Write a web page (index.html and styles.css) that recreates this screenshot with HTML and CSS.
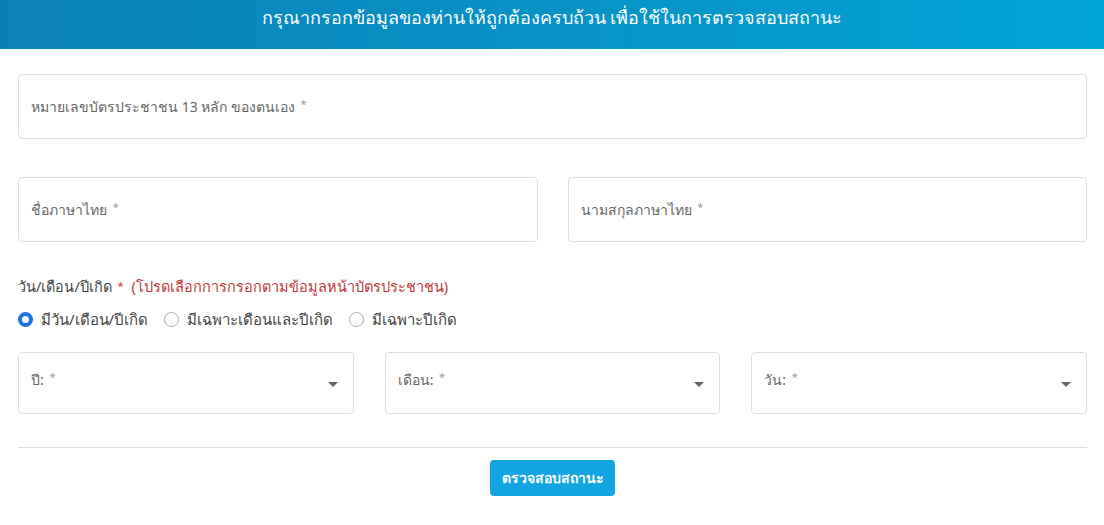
FILE: index.html
```html
<!DOCTYPE html>
<html lang="th">
<head>
<meta charset="UTF-8">
<title>ตรวจสอบสถานะ</title>
<link rel="stylesheet" href="styles.css">
</head>
<body>

<div class="header">กรุณากรอกข้อมูลของท่านให้ถูกต้องครบถ้วน เพื่อใช้ในการตรวจสอบสถานะ</div>

<form class="form">
  <!-- เลขบัตรประชาชน -->
  <div class="field">
    <span class="placeholder">หมายเลขบัตรประชาชน 13 หลัก ของตนเอง <span class="star">*</span></span>
  </div>

  <!-- ชื่อ / นามสกุล -->
  <div class="row two">
    <div class="field"><span class="placeholder">ชื่อภาษาไทย <span class="star">*</span></span></div>
    <div class="field"><span class="placeholder">นามสกุลภาษาไทย <span class="star">*</span></span></div>
  </div>

  <!-- วันเกิด -->
  <div class="birth-label">
    วัน/เดือน/ปีเกิด <span class="star">*</span>
    <span class="note">(โปรดเลือกการกรอกตามข้อมูลหน้าบัตรประชาชน)</span>
  </div>
  <div class="radios">
    <label class="radio"><span class="dot checked"></span>มีวัน/เดือน/ปีเกิด</label>
    <label class="radio"><span class="dot"></span>มีเฉพาะเดือนและปีเกิด</label>
    <label class="radio"><span class="dot"></span>มีเฉพาะปีเกิด</label>
  </div>

  <div class="row three">
    <div class="field select"><span class="placeholder">ปี: <span class="star">*</span></span><span class="arrow"></span></div>
    <div class="field select"><span class="placeholder">เดือน: <span class="star">*</span></span><span class="arrow"></span></div>
    <div class="field select"><span class="placeholder">วัน: <span class="star">*</span></span><span class="arrow"></span></div>
  </div>

  <hr class="divider">

  <div class="actions">
    <button type="button" class="btn">ตรวจสอบสถานะ</button>
  </div>
</form>

</body>
</html>
```

FILE: styles.css
```css
* {
  box-sizing: border-box;
}

body {
  margin: 0;
  background-color: #fff;
  font-family: "Noto Sans", "DejaVu Sans", sans-serif;
  color: #444;
}

.header {
  height: 49px;
  padding-top: 5px;
  background: linear-gradient(90deg, #0a80b7 0%, #0794c7 55%, #01a4d6 100%);
  color: #fff;
  font-size: 18px;
  text-align: center;
  line-height: 25px;
}

.form {
  padding: 25px 17px 0 18px;
}

.field {
  display: flex;
  align-items: center;
  height: 65px;
  padding: 0 12px;
  border: 1px solid #dedede;
  border-radius: 4px;
  background-color: #fff;
}

.placeholder {
  font-size: 14px;
  color: #666;
}

.star {
  margin-left: 2px;
  font-size: 11px;
  color: #999;
  vertical-align: top;
}

.row {
  display: grid;
  margin-top: 38px;
}

.row.two {
  grid-template-columns: 1fr 1fr;
  gap: 30px;
}

.row.three {
  grid-template-columns: 1fr 1fr 1fr;
  gap: 31px;
  margin-top: 22px;
}

.select {
  height: 62px;
  justify-content: space-between;
  align-items: center;
  padding-right: 15px;
}

.select .placeholder {
  margin-top: -6px;
}

.arrow {
  width: 0;
  height: 0;
  border-left: 5px solid transparent;
  border-right: 5px solid transparent;
  border-top: 5px solid #666;
  margin-top: 2px;
}

.birth-label {
  margin-top: 33px;
  font-size: 14.5px;
  color: #444;
  line-height: 22px;
}

.birth-label .star {
  color: #d03a3a;
}

.note {
  margin-left: 4px;
  color: #c0393b;
}

.radios {
  display: flex;
  gap: 16px;
  margin-top: 11px;
  font-size: 15px;
  line-height: 22px;
}

.radio {
  display: flex;
  align-items: center;
  gap: 8px;
  color: #444;
}

.dot {
  width: 15px;
  height: 15px;
  border: 1px solid #aaa;
  border-radius: 50%;
  background-color: #fff;
}

.dot.checked {
  border: 4px solid #1a73e8;
}

.divider {
  margin: 33px 0 0 0;
  border: none;
  border-top: 1px solid #ddd;
}

.actions {
  display: flex;
  justify-content: center;
  padding-top: 12px;
}

.btn {
  width: 125px;
  height: 36px;
  border: none;
  border-radius: 4px;
  background-color: #12a5e2;
  color: #fff;
  font-family: inherit;
  font-size: 14px;
  font-weight: 600;
  cursor: pointer;
}
```
